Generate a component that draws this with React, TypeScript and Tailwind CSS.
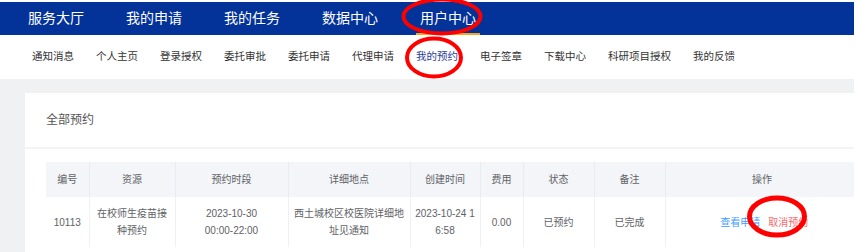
const mainNav = ['服务大厅', '我的申请', '我的任务', '数据中心', '用户中心'];
const subNav = ['通知消息', '个人主页', '登录授权', '委托审批', '委托申请', '代理申请', '我的预约', '电子签章', '下载中心', '科研项目授权', '我的反馈'];

const columns = [
  { title: '编号', width: 43 },
  { title: '资源', width: 86 },
  { title: '预约时段', width: 113 },
  { title: '详细地点', width: 122 },
  { title: '创建时间', width: 70 },
  { title: '费用', width: 43 },
  { title: '状态', width: 71 },
  { title: '备注', width: 71 },
  { title: '操作', width: 194 },
];

export default function App() {
  return (
    <div className="relative w-[857px] h-[252px] overflow-hidden bg-white font-['Liberation_Sans','Noto_Sans_CJK_SC',sans-serif]">
      <div className="w-[854px]">
        {/* top nav */}
        <div className="mt-[2px] h-[33px] bg-[#033399] flex pl-[28px] gap-[42px] text-[14px] text-white">
          {mainNav.map((item) => (
            <div
              key={item}
              className={
                item === '用户中心'
                  ? 'flex items-center px-[4px] -mx-[4px] border-b-2 border-[#f5a623] pt-[2px]'
                  : 'flex items-center'
              }
            >
              {item}
            </div>
          ))}
        </div>

        {/* sub nav */}
        <div className="h-[44px] flex items-center pl-[32px] gap-[22px] text-[10.5px] text-[#333]">
          {subNav.map((item) => (
            <span key={item} className={item === '我的预约' ? 'text-[#2b3d9c]' : ''}>
              {item}
            </span>
          ))}
        </div>

        {/* content */}
        <div className="bg-[#f0f1f3] pt-[14px] pl-[25px] h-[200px]">
          <div className="bg-white h-full">
            <div className="h-[54px] flex items-center pl-[21px] text-[12px] text-[#555]">全部预约</div>
            <div className="h-[2px] bg-[#f3f4f6]" />
            <div className="pt-[13px] pl-[21px] overflow-hidden">
              <table className="table-fixed border-collapse w-[813px] text-[10px] text-[#606266] text-center">
                <colgroup>
                  {columns.map((c) => (
                    <col key={c.title} style={{ width: c.width }} />
                  ))}
                </colgroup>
                <thead>
                  <tr className="bg-[#f3f5f8] h-[35px]">
                    {columns.map((c) => (
                      <th key={c.title} className="font-normal border-r border-[#e8ebf0]">
                        {c.title}
                      </th>
                    ))}
                  </tr>
                </thead>
                <tbody>
                  <tr className="leading-[17px]">
                    <td className="py-[8px] border-r border-[#eef0f4]">10113</td>
                    <td className="py-[8px] px-[7px] border-r border-[#eef0f4]">在校师生疫苗接种预约</td>
                    <td className="py-[8px] px-[20px] border-r border-[#eef0f4]">2023-10-30 00:00-22:00</td>
                    <td className="py-[8px] px-[5px] border-r border-[#eef0f4]">西土城校区校医院详细地址见通知</td>
                    <td className="py-[8px] px-[4px] break-all border-r border-[#eef0f4]">2023-10-24 16:58</td>
                    <td className="py-[8px] border-r border-[#eef0f4]">0.00</td>
                    <td className="py-[8px] border-r border-[#eef0f4]">已预约</td>
                    <td className="py-[8px] border-r border-[#eef0f4]">已完成</td>
                    <td className="py-[8px]">
                      <div className="flex justify-center gap-[8px] pl-[4px]">
                        <span className="text-[#409eff]">查看申请</span>
                        <span className="text-[#f56c6c]">取消预约</span>
                      </div>
                    </td>
                  </tr>
                </tbody>
              </table>
            </div>
          </div>
        </div>
      </div>

      {/* red annotation marks */}
      <svg className="absolute inset-0 pointer-events-none" width="857" height="252">
        <ellipse cx="442" cy="16.5" rx="38.5" ry="17" fill="none" stroke="#ff0000" strokeWidth="4" />
        <ellipse cx="434" cy="57.5" rx="27" ry="19" fill="none" stroke="#ff0000" strokeWidth="4" />
        <ellipse cx="777" cy="216.5" rx="27.5" ry="18.5" fill="none" stroke="#ff0000" strokeWidth="5" />
      </svg>
    </div>
  );
}
